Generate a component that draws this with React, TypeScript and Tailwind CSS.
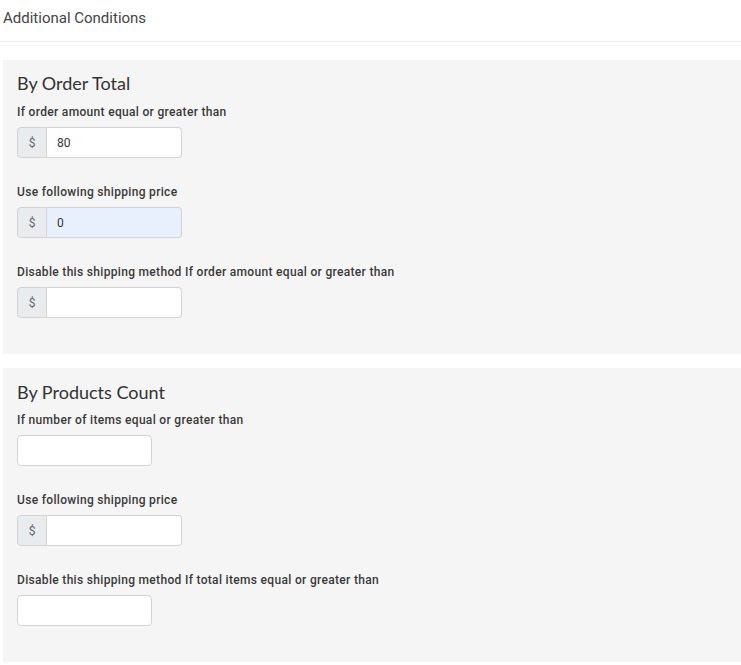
import React from 'react';

const roboto = { fontFamily: 'Roboto, "Liberation Sans", sans-serif' };

type FieldProps = {
    label: string;
    value?: string;
    prefix?: boolean;
    filled?: boolean;
    className?: string;
};

const Field: React.FC<FieldProps> = ({ label, value = '', prefix = true, filled = false, className = 'mt-[26px]' }) => {
    return (
        <div className={className}>
            <label className="block text-[12px] leading-4 font-medium tracking-[0.32px] text-[#3a3a3a]">{label}</label>
            {prefix ? (
                <div className="mt-[7px] flex h-[31px] w-[165px]">
                    <span className="flex w-[30px] items-center justify-center rounded-l-[4px] border border-[#d3d3d3] bg-[#e9ecef] text-[12px] text-[#666]">
                        $
                    </span>
                    <input
                        readOnly
                        value={value}
                        className={`min-w-0 flex-1 rounded-r-[4px] border border-l-0 border-[#d3d3d3] pl-[10px] text-[12px] text-[#333] outline-none ${filled ? 'bg-[#e8f0fe]' : 'bg-white'}`}
                        style={roboto}
                    />
                </div>
            ) : (
                <input
                    readOnly
                    value={value}
                    className="mt-[7px] block h-[31px] w-[135px] rounded-[4px] border border-[#d3d3d3] bg-white px-[10px] text-[12px] outline-none"
                    style={roboto}
                />
            )}
        </div>
    );
};

export default function App() {
    return (
        <div className="min-h-screen bg-white" style={roboto}>
            {/* Header */}
            <div className="h-[42px] border-b border-[#ececec] pl-[3px] pt-[8px]">
                <h2 className="text-[15px] leading-5 text-[#444]">Additional Conditions</h2>
            </div>

            {/* By Order Total */}
            <section className="ml-[3px] mt-[18px] bg-[#f5f5f5] pl-[14px] pt-[11px] pb-[36px]">
                <h3 className="text-[18px] leading-6 text-[#333]" style={{ fontFamily: 'Lato, "Open Sans", sans-serif' }}>
                    By Order Total
                </h3>
                <Field className="mt-[9px]" label="If order amount equal or greater than" value="80" />
                <Field label="Use following shipping price" value="0" filled />
                <Field label="Disable this shipping method If order amount equal or greater than" />
            </section>

            {/* By Products Count */}
            <section className="ml-[3px] mt-[14px] bg-[#f5f5f5] pl-[14px] pt-[12px] pb-[36px]">
                <h3 className="text-[18px] leading-6 text-[#333]" style={{ fontFamily: 'Lato, "Open Sans", sans-serif' }}>
                    By Products Count
                </h3>
                <Field className="mt-[8px]" label="If number of items equal or greater than" prefix={false} />
                <Field label="Use following shipping price" />
                <Field label="Disable this shipping method If total items equal or greater than" prefix={false} />
            </section>
        </div>
    );
}
